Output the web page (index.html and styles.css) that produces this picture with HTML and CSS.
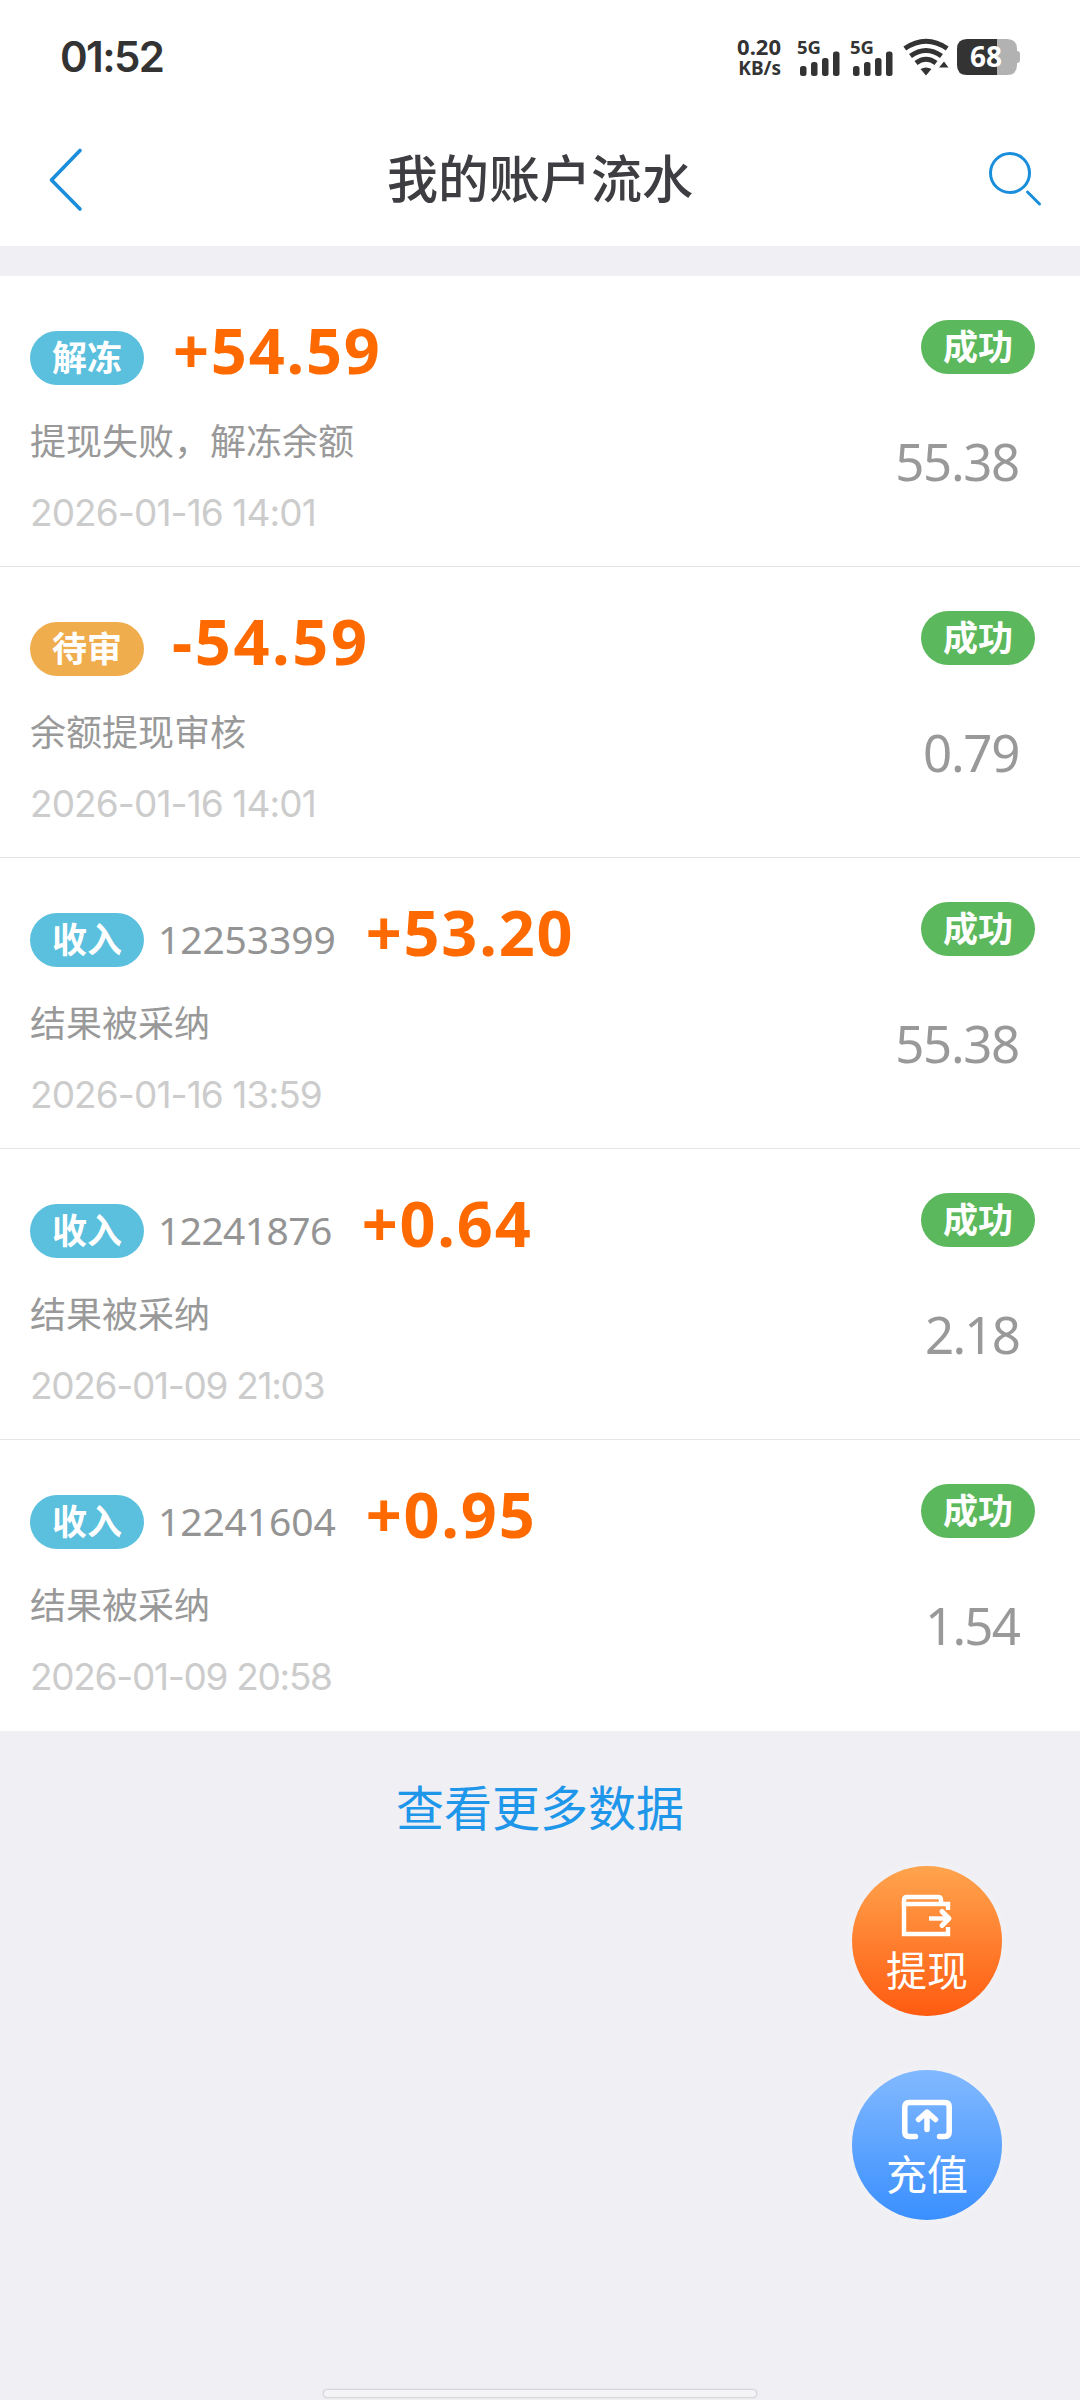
FILE: index.html
```html
<!DOCTYPE html>
<html lang="zh-CN">
<head>
<meta charset="utf-8">
<title>我的账户流水</title>
<link rel="stylesheet" href="styles.css">
</head>
<body>
<div class="status">
  <div class="clock">01:52</div>
  <div class="speed"><span class="rate">0.20</span><span class="unit">KB/s</span></div>
  <svg class="signal" width="42" height="38" viewBox="0 0 42 38"><text class="net" x="-1" y="15.500">5G</text><g fill="#333"><rect x="2" y="28" width="6.5" height="10" rx="2.5"/><rect x="13" y="24" width="6.5" height="14" rx="2.5"/><rect x="24" y="20" width="6.5" height="18" rx="2.5"/><rect x="35" y="13.500" width="6.500" height="24.500" rx="2.500"/></g></svg>
  <svg class="signal second" width="42" height="38" viewBox="0 0 42 38"><text class="net" x="-1" y="15.500">5G</text><g fill="#333"><rect x="2" y="28" width="6.5" height="10" rx="2.5"/><rect x="13" y="24" width="6.5" height="14" rx="2.5"/><rect x="24" y="20" width="6.5" height="18" rx="2.5"/><rect x="35" y="13.500" width="6.500" height="24.500" rx="2.500"/></g></svg>
  <svg class="wifi" width="46" height="38" viewBox="0 0 46 38"><g fill="none" stroke="#333" stroke-width="5"><path d="M1.800 10.500Q23 -4 44.200 10.500"/><path d="M7.500 18Q23 7 38.500 18"/><path d="M13 25Q23 17.500 33 25"/></g><path d="M17.500 31Q23 28 28.500 31L23 37.500ZM36 29.500L41 23.500L45.500 29.500Z" fill="#333"/></svg>
  <div class="battery"><svg width="63" height="36" viewBox="0 0 63 36"><path d="M40 0H50Q60 0 60 10V12Q63 12 63 15V21Q63 24 60 24V26Q60 36 50 36H40Z" fill="#b2b2b2"/><path d="M40 0H10Q0 0 0 10V26Q0 36 10 36H40Z" fill="#333"/></svg><span class="level">68</span></div>
</div>
<header class="navbar">
  <svg class="back" width="36" height="64" viewBox="0 0 36 64"><path d="M32 2.500L3.500 32L32 61" fill="none" stroke="#1a8edb" stroke-width="3.600" stroke-linecap="round" stroke-linejoin="round"/></svg>
  <h1 class="title">我的账户流水</h1>
  <svg class="search" width="56" height="58" viewBox="0 0 56 58"><g fill="none" stroke="#1a8edb" stroke-width="3" stroke-linecap="round"><circle cx="22" cy="22" r="19.500"/><path d="M39.500 41L51.500 53"/></g></svg>
</header>
<main class="list">
  <section class="row">
    <div class="info">
      <div class="head"><span class="pill blue">解冻</span><span class="amount">+54.59</span></div>
      <div class="desc">提现失败，解冻余额</div>
      <div class="date">2026-01-16 14:01</div>
    </div>
    <div class="side"><span class="pill green">成功</span><span class="balance">55.38</span></div>
  </section>
  <section class="row">
    <div class="info">
      <div class="head"><span class="pill amber">待审</span><span class="amount minus">-54.59</span></div>
      <div class="desc">余额提现审核</div>
      <div class="date">2026-01-16 14:01</div>
    </div>
    <div class="side"><span class="pill green">成功</span><span class="balance">0.79</span></div>
  </section>
  <section class="row">
    <div class="info">
      <div class="head"><span class="pill blue">收入</span><span class="order">12253399</span><span class="amount">+53.20</span></div>
      <div class="desc">结果被采纳</div>
      <div class="date">2026-01-16 13:59</div>
    </div>
    <div class="side"><span class="pill green">成功</span><span class="balance">55.38</span></div>
  </section>
  <section class="row">
    <div class="info">
      <div class="head"><span class="pill blue">收入</span><span class="order tight">12241876</span><span class="amount">+0.64</span></div>
      <div class="desc">结果被采纳</div>
      <div class="date tight">2026-01-09 21:03</div>
    </div>
    <div class="side"><span class="pill green">成功</span><span class="balance tight">2.18</span></div>
  </section>
  <section class="row">
    <div class="info">
      <div class="head"><span class="pill blue">收入</span><span class="order">12241604</span><span class="amount">+0.95</span></div>
      <div class="desc">结果被采纳</div>
      <div class="date tight">2026-01-09 20:58</div>
    </div>
    <div class="side"><span class="pill green">成功</span><span class="balance tight">1.54</span></div>
  </section>
</main>
<div class="more">查看更多数据</div>
<div class="actions">
  <div class="fab withdraw">
    <svg width="52" height="44" viewBox="0 0 52 44"><g fill="none" stroke="#fff" stroke-width="4.400"><path d="M47 16V10H3V40H47V33"/><path d="M3 12V6Q3 3 6 3H37Q40 3 40 6V10"/><path d="M28 24.500H46"/><path d="M41 17.500L48 24.500L41 31.500" stroke-width="5" stroke-linecap="round" stroke-linejoin="round"/></g></svg>
    <span>提现</span>
  </div>
  <div class="fab topup">
    <svg width="52" height="44" viewBox="0 0 52 44"><g fill="none" stroke="#fff" stroke-width="5.500" stroke-linecap="round" stroke-linejoin="round"><path d="M14.500 38.500H8Q3.800 38.500 3.800 34V9Q3.800 4.500 8 4.500H44Q48.200 4.500 48.200 9V34Q48.200 38.500 44 38.500H38.500"/><path d="M26 31.500V14.500M17.500 21.500L26 14L34.500 21.500"/></g></svg>
    <span>充值</span>
  </div>
</div>
<div class="homebar"></div>
</body>
</html>
```
FILE: styles.css
```css
* { box-sizing: border-box; }
body {
  margin: 0;
  width: 1080px;
  height: 2400px;
  position: relative;
  overflow: hidden;
  background: #efeff4;
  font-family: "Noto Sans CJK SC", sans-serif;
}
svg { display: block; flex: none; overflow: visible; }

.status {
  height: 114px;
  padding: 0 60px 0 60px;
  display: flex;
  align-items: center;
  background: #fff;
  color: #333;
}
.clock {
  flex: 1;
  font: 600 42px/60px Inter, sans-serif;
  letter-spacing: -1.6px;
}
.speed {
  display: flex;
  flex-direction: column;
  align-items: flex-end;
  margin-right: 17px;
  font-family: "Noto Sans", sans-serif;
  font-weight: 700;
}
.rate { font-size: 22px; line-height: 22px; }
.unit { font-size: 19px; line-height: 22px; }
.net { font: 700 18.5px "Noto Sans", sans-serif; fill: #333; }
.second { margin-left: 11px; }
.wifi { margin-left: 10px; }
.battery { position: relative; margin-left: 8px; }
.level {
  position: absolute;
  left: 0;
  top: 0;
  width: 58px;
  text-align: center;
  color: #fff;
  font: 700 28px/35px "Noto Sans", sans-serif;
}

.navbar {
  height: 132px;
  padding: 0 36px 0 48px;
  display: flex;
  align-items: center;
  justify-content: space-between;
  background: #fff;
}
.title {
  margin: -8px 0 0 8px;
  font-size: 51px;
  line-height: 60px;
  font-weight: 500;
  color: #3d3d42;
}

.list { margin-top: 30px; background: #fff; }
.row {
  height: 291px;
  padding: 44px 45px 0 30px;
  display: flex;
  justify-content: space-between;
  border-bottom: 1px solid #e5e5e5;
}
.row:last-child { border-bottom: 0; }
.info { padding-top: 11px; }
.head { height: 54px; display: flex; align-items: center; }
.pill {
  width: 114px;
  height: 54px;
  border-radius: 27px;
  text-align: center;
  color: #fff;
  font-size: 35px;
  font-weight: 700;
  line-height: 50px;
}
.blue { background: #5bc0de; }
.amber { background: #f0ad4e; }
.green { background: #5cb85c; }
.order {
  margin-left: 14px;
  font: 400 39px/52px "Noto Sans", sans-serif;
  letter-spacing: -0.1px;
  margin-bottom: 2px;
  color: #949494;
}
.order.tight { letter-spacing: -0.6px; }
.amount {
  margin: 0 0 17px 29px;
  font: 700 63px/54px "Noto Sans", sans-serif;
  letter-spacing: 1.8px;
  color: #ff6a00;
}
.order + .amount { margin-left: 30px; }
.amount.minus { margin-left: 28px; letter-spacing: 2.6px; }
.desc { margin-top: 27px; font-size: 36px; line-height: 54px; color: #999; }
.date {
  margin-top: 25px;
  font: 400 37px/44px Inter, sans-serif;
  letter-spacing: -0.9px;
  color: #ccc;
}
.date.tight { letter-spacing: -1.3px; }
.side { display: flex; flex-direction: column; align-items: flex-end; }
.balance {
  margin: 57px 16px 0 0;
  font: 400 51px/60px "Noto Sans", sans-serif;
  letter-spacing: -1.3px;
  color: #999;
}
.balance.tight { letter-spacing: -1.8px; }

.more {
  margin-top: 38px;
  text-align: center;
  font-size: 48px;
  line-height: 72px;
  color: #1e96ea;
}

.actions {
  position: absolute;
  left: 852px;
  top: 1866px;
  display: flex;
  flex-direction: column;
  gap: 54px;
}
.fab {
  width: 150px;
  height: 150px;
  padding-top: 28px;
  border-radius: 50%;
  display: flex;
  flex-direction: column;
  align-items: center;
  color: #fff;
  font-size: 41px;
  line-height: 60px;
  box-shadow: 0 0 20px rgba(255, 255, 255, 0.3);
}
.withdraw { background: linear-gradient(#ffa44e, #ff5b10); }
.topup { background: linear-gradient(#82b9ff, #3a8fff); }

.homebar {
  position: absolute;
  left: 323px;
  top: 2389px;
  width: 434px;
  height: 9px;
  border: 1px solid #d6d6d8;
  border-radius: 4px;
  background: #f4f4f6;
  box-shadow: 0 0 2px rgba(0, 0, 0, 0.1);
}
```
